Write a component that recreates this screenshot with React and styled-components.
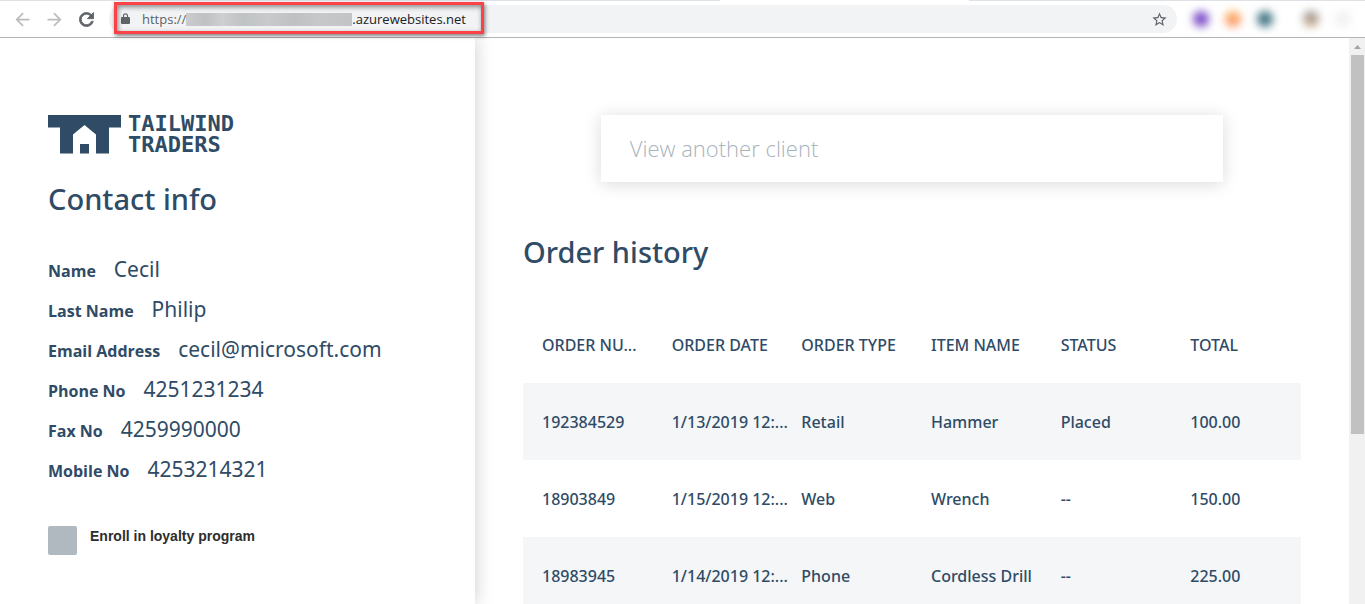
import React from "react";
import styled, { createGlobalStyle } from "styled-components";
import { MdArrowBack, MdArrowForward, MdRefresh, MdStarBorder } from "react-icons/md";

const navy = "#2f4b66";
const sans = '"Open Sans", "Noto Sans", sans-serif';
const medium = '"Noto Sans", "Open Sans", sans-serif';

const GlobalStyle = createGlobalStyle`
  * { box-sizing: border-box; }
  body { margin: 0; background: #fff; font-family: ${sans}; color: ${navy}; }
  button, input { font: inherit; color: inherit; }
`;

const Window = styled.div`
  display: flex;
  flex-direction: column;
  height: 100vh;
  overflow: hidden;
`;

const TabEdge = styled.div`
  display: flex;
  justify-content: space-between;
  height: 1px;
`;

const TabEdgePart = styled.span`
  width: ${(p) => p.$width};
  background: #dee1e6;
`;

const Toolbar = styled.header`
  display: flex;
  align-items: center;
  height: 37px;
  flex: none;
  padding-left: 6px;
  border-bottom: 1px solid #b1b3b5;
`;

const ToolButton = styled.button`
  display: flex;
  align-items: center;
  justify-content: center;
  width: 32px;
  height: 28px;
  padding: 0;
  border: 0;
  background: none;
  color: ${(p) => (p.disabled ? "#babcbe" : "#5f6368")};
`;

const ReloadIcon = styled(MdRefresh)`
  stroke-width: 0;
  path:last-child {
    stroke: currentColor;
    stroke-width: 1px;
  }
`;

const AddressBar = styled.div`
  position: relative;
  display: flex;
  align-items: center;
  flex: 1;
  height: 28px;
  margin-left: 7px;
  padding: 0 2px 0 12px;
  border-radius: 14px;
  background: #f1f3f4;
  font-size: 13px;
  color: #5f6368;
`;

const Scheme = styled.label`
  padding-left: 12px;
`;

const Redacted = styled.span`
  width: 166px;
  height: 13px;
  background: linear-gradient(90deg, #c9cbcc, #bfc1c3 12%, #cdcfd0 22%, #c0c3c4 34%, #c8cacb 50%, #bec0c2 66%, #c6c8c9 80%, #c2c4c6);
`;

const AddressInput = styled.input`
  flex: 1;
  min-width: 0;
  padding: 0;
  border: 0;
  outline: 0;
  background: none;
  color: #202124;
`;

const Highlight = styled.div`
  position: absolute;
  left: 5px;
  top: -3px;
  width: 370px;
  height: 32px;
  border: 3px solid #fb4246;
  box-shadow: 1px 2px 4px rgba(0, 0, 0, 0.5), inset 1px 2px 5px rgba(0, 0, 0, 0.45);
  pointer-events: none;
`;

const Extensions = styled.div`
  display: flex;
  align-items: center;
  gap: 16px;
  padding: 0 14px 0 16px;
`;

const Extension = styled.span`
  width: 16px;
  height: 16px;
  margin-left: ${(p) => (p.$apart ? "14px" : "0")};
  border-radius: 50%;
  background: ${(p) => p.$fill};
  filter: blur(4px);
`;

const Page = styled.div`
  display: flex;
  flex: 1;
  min-height: 0;
`;

const Sidebar = styled.aside`
  position: relative;
  flex: none;
  width: 34.8%;
  padding: 77px 48px 0;
  box-shadow: 2px 0 16px rgba(0, 0, 0, 0.17);
  clip-path: inset(0 -24px 0 0);
`;

const Brand = styled.a`
  display: flex;
  gap: 7px;
  height: 39px;
  color: ${navy};
  text-decoration: none;
`;

const Wordmark = styled.span`
  width: 110px;
  font: bold 22px/21px "DejaVu Sans Mono", monospace;
  margin-top: -2px;
`;

const Heading = styled.h2`
  margin: 0;
  font-family: ${medium};
  font-size: 29px;
  line-height: 40px;
  font-weight: 500;
`;

const ContactHeading = styled(Heading)`
  margin-top: 25px;
`;

const Details = styled.dl`
  margin: 30px 0 0;
`;

const Detail = styled.div`
  display: flex;
  align-items: baseline;
  gap: 18px;
  height: 40px;
`;

const Term = styled.dt`
  font-size: 16px;
  font-weight: 700;
`;

const Value = styled.dd`
  margin: 0;
  font-family: ${medium};
  font-size: 21px;
  line-height: 40px;
`;

const Enroll = styled.label`
  display: flex;
  align-items: flex-start;
  gap: 13px;
  margin-top: 37px;
  font: bold 14px/20px "Liberation Sans", Arial, sans-serif;
  color: #2d2d2d;
`;

const Checkbox = styled.input`
  appearance: none;
  width: 29px;
  height: 29px;
  margin: 0;
  border-radius: 2px;
  background: #b0b8c0;
`;

const Main = styled.main`
  flex: 1;
  min-width: 0;
  padding: 77px 48px 0;
  overflow: hidden;
`;

const ClientSearch = styled.input`
  display: block;
  width: 80%;
  height: 67px;
  margin: 0 auto;
  padding: 0 29px 2px;
  border: 0;
  outline: 0;
  background: #fff;
  box-shadow: 0 2px 16px rgba(0, 0, 0, 0.15);
  font-size: 22px;
  font-weight: 300;
  &::placeholder { color: #a9b3bb; opacity: 1; }
`;

const OrderHeading = styled(Heading)`
  margin-top: 50px;
`;

const Orders = styled.table`
  width: 100%;
  margin-top: 34px;
  border-collapse: collapse;
  table-layout: fixed;
  font-family: ${medium};
  font-size: 16px;
  tbody tr:nth-child(odd) { background: #f4f6f8; }
`;

const Cell = styled.td`
  height: 77px;
  padding: 0 0 0 19px;
  text-align: left;
  font-weight: 500;
  white-space: nowrap;
`;

const Scrollbar = styled.div`
  flex: none;
  width: 16px;
  background: #f1f1f1;
  display: flex;
  flex-direction: column;
  align-items: center;
`;

const ScrollUp = styled.div`
  display: flex;
  align-items: center;
  justify-content: center;
  width: 100%;
  height: 17px;
`;

const Thumb = styled.div`
  width: 13px;
  height: 67%;
  background: #c1c1c1;
`;

const details = [
  ["Name", "Cecil"],
  ["Last Name", "Philip"],
  ["Email Address", "cecil@microsoft.com"],
  ["Phone No", "4251231234"],
  ["Fax No", "4259990000"],
  ["Mobile No", "4253214321"],
];

const columns = ["ORDER NU...", "ORDER DATE", "ORDER TYPE", "ITEM NAME", "STATUS", "TOTAL"];

const orders = [
  ["192384529", "1/13/2019 12:...", "Retail", "Hammer", "Placed", "100.00"],
  ["18903849", "1/15/2019 12:...", "Web", "Wrench", "--", "150.00"],
  ["18983945", "1/14/2019 12:...", "Phone", "Cordless Drill", "--", "225.00"],
];

function LockIcon() {
  return (
    <svg width="9" height="12" viewBox="0 0 9 12" aria-hidden="true">
      <rect y="4" width="9" height="7" rx="1" fill="currentColor" />
      <path d="M2.500 5V2.800a2 2 0 0 1 4 0V5" fill="none" stroke="currentColor" strokeWidth="1.200" />
    </svg>
  );
}

function BrowserToolbar() {
  return (
    <Toolbar>
      <ToolButton disabled aria-label="Back"><MdArrowBack size={21} /></ToolButton>
      <ToolButton disabled aria-label="Forward"><MdArrowForward size={21} /></ToolButton>
      <ToolButton aria-label="Reload"><ReloadIcon size={21} /></ToolButton>
      <AddressBar>
        <LockIcon />
        <Scheme htmlFor="address">https://</Scheme>
        <Redacted />
        <AddressInput id="address" defaultValue=".azurewebsites.net" />
        <ToolButton aria-label="Bookmark"><MdStarBorder size={17} /></ToolButton>
        <Highlight />
      </AddressBar>
      <Extensions>
        <Extension $fill="#7d4fc9" />
        <Extension $fill="linear-gradient(#fbb45c, #fb8f6c)" />
        <Extension $fill="#427685" />
        <Extension $fill="linear-gradient(#8f9299, #d3ae84)" $apart />
        <Extension $fill="#f1f1f1" />
      </Extensions>
    </Toolbar>
  );
}

export default function App() {
  return (
    <Window>
      <GlobalStyle />
      <TabEdge>
        <TabEdgePart $width="720px" />
        <TabEdgePart $width="29%" />
      </TabEdge>
      <BrowserToolbar />
      <Page>
        <Sidebar>
          <Brand href="#">
            <svg width="73" height="39" viewBox="0 0 73 39" aria-hidden="true">
              <path fill={navy} d="M0 0H73V12.500H61V38.500H48V19.500L36.500 10L25 19.500V38.500H12V12.500H0Z" />
              <path fill={navy} d="M32 29H41V38.500H32Z" />
            </svg>
            <Wordmark>TAILWIND TRADERS</Wordmark>
          </Brand>
          <ContactHeading>Contact info</ContactHeading>
          <Details>
            {details.map(([term, value]) => (
              <Detail key={term}><Term>{term}</Term><Value>{value}</Value></Detail>
            ))}
          </Details>
          <Enroll><Checkbox type="checkbox" />Enroll in loyalty program</Enroll>
        </Sidebar>
        <Main>
          <ClientSearch type="text" aria-label="View another client" placeholder="View another client" />
          <OrderHeading>Order history</OrderHeading>
          <Orders>
            <thead>
              <tr>{columns.map((c) => <Cell as="th" scope="col" key={c}>{c}</Cell>)}</tr>
            </thead>
            <tbody>
              {orders.map((row) => (
                <tr key={row[0]}>{row.map((v, i) => <Cell key={columns[i]}>{v}</Cell>)}</tr>
              ))}
            </tbody>
          </Orders>
        </Main>
        <Scrollbar aria-hidden="true">
          <ScrollUp>
            <svg width="7" height="4" viewBox="0 0 7 4"><path fill="#a3a3a3" d="M3.500 0L7 4H0Z" /></svg>
          </ScrollUp>
          <Thumb />
        </Scrollbar>
      </Page>
    </Window>
  );
}
